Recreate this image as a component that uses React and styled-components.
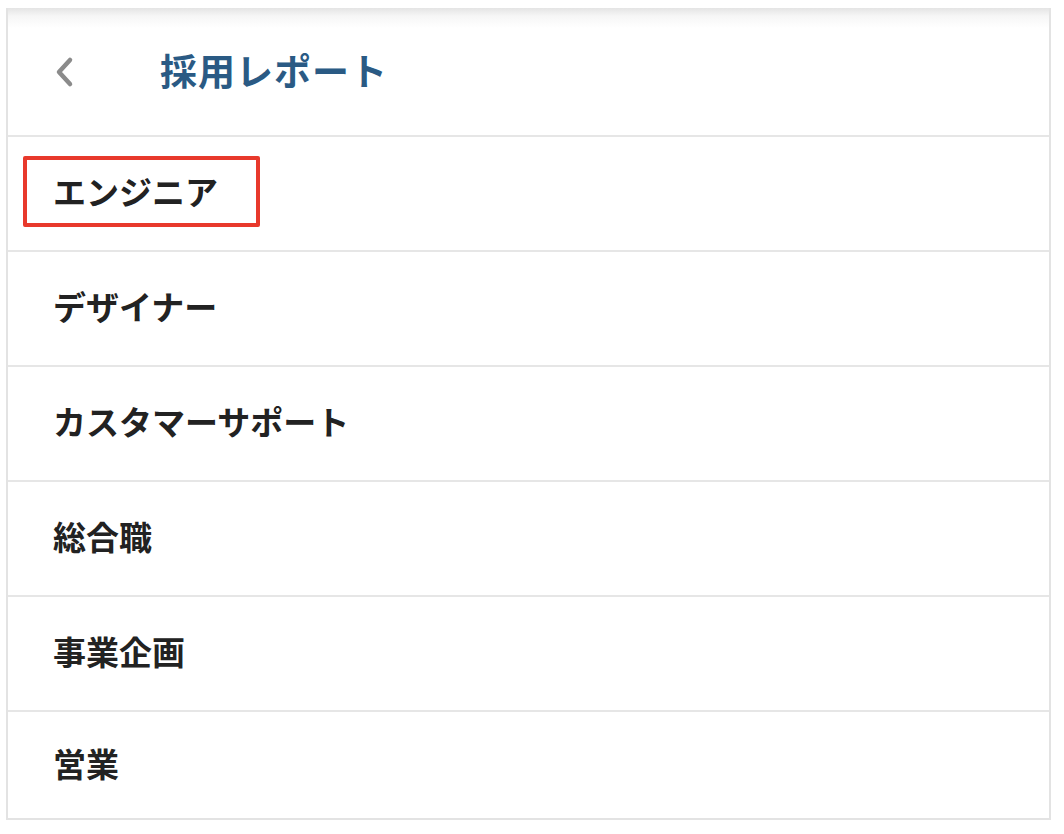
import React from "react";
import styled, { createGlobalStyle } from "styled-components";

const GlobalStyle = createGlobalStyle`
  html, body {
    margin: 0;
    padding: 0;
    background: #fff;
  }
  body {
    font-family: "Noto Sans CJK JP", "Noto Sans", sans-serif;
  }
`;

const categories = [
  { label: "エンジニア", marked: true },
  { label: "デザイナー" },
  { label: "カスタマーサポート" },
  { label: "総合職" },
  { label: "事業企画" },
  { label: "営業" },
];

function App() {
  return (
    <>
      <GlobalStyle />
      <Page>
        <Panel>
          <Header>
            <BackButton aria-label="戻る">
              <svg width="22" height="32" viewBox="0 0 22 32" fill="none">
                <path
                  d="M17 4 L6 16 L17 28"
                  stroke="#8b8b8b"
                  strokeWidth="4.5"
                  strokeLinecap="round"
                  strokeLinejoin="round"
                />
              </svg>
            </BackButton>
            <Title>採用レポート</Title>
          </Header>
          <List>
            {categories.map((c) => (
              <Row key={c.label}>
                <Label marked={c.marked ? 1 : 0}>{c.label}</Label>
              </Row>
            ))}
          </List>
        </Panel>
      </Page>
    </>
  );
}

export default App;

const Page = styled.div`
  padding: 8px 13px 16px 6px;
`;

const Panel = styled.div`
  width: 1045px;
  box-sizing: border-box;
  border: 2px solid #e3e3e3;
  border-top: none;
  background: #fff;
`;

const Header = styled.div`
  height: 127px;
  box-sizing: border-box;
  display: flex;
  align-items: center;
  padding: 0 0 4px 45px;
  background: linear-gradient(to bottom, #e4e4e4 0px, #f6f6f6 8px, #fff 20px);
`;

const BackButton = styled.button`
  border: none;
  background: none;
  padding: 0;
  width: 26px;
  height: 32px;
  display: flex;
  align-items: center;
  margin: 4px 81px 0 0;
  cursor: pointer;
`;

const Title = styled.h1`
  margin: 0;
  font-size: 37px;
  font-weight: 700;
  color: #2a5a84;
  letter-spacing: 1px;
`;

const List = styled.ul`
  list-style: none;
  margin: 0;
  padding: 0;
`;

const Row = styled.li`
  height: 113px;
  box-sizing: content-box;
  border-top: 2px solid #e6e6e6;
  display: flex;
  align-items: center;
  padding-left: 45px;
  padding-bottom: 0;

  &:last-child {
    height: 106px;
  }
`;

const Label = styled.span`
  position: relative;
  top: -2px;
  display: inline-block;
  font-size: 33px;
  font-weight: 700;
  color: #222;
  line-height: 1;

  &::after {
    content: "";
    display: ${(p) => (p.marked ? "block" : "none")};
    position: absolute;
    left: -30px;
    top: -19px;
    width: 229px;
    height: 63px;
    border: 4px solid #e8392c;
    border-radius: 2px;
  }
`;
